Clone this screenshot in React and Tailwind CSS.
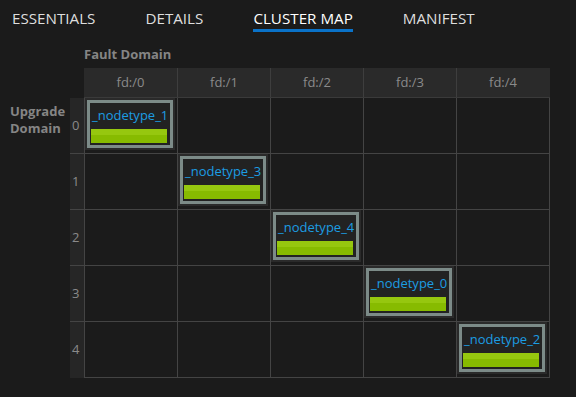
const tabs = ['ESSENTIALS', 'DETAILS', 'CLUSTER MAP', 'MANIFEST']
const faultDomains = ['fd:/0', 'fd:/1', 'fd:/2', 'fd:/3', 'fd:/4']
const nodes = ['_nodetype_1', '_nodetype_3', '_nodetype_4', '_nodetype_0', '_nodetype_2']

const NodeCard = ({ name }) => (
  <div className="w-[90px] h-[52px] border-2 border-[#2a2a2a]">
    <div className="h-full flex flex-col border-[3px] border-[#7c8b88] bg-[#222222] pl-[1px] pr-[3px] pb-[2px]">
      <div className="flex-1 pt-[4px] pl-[1px] text-[13px] leading-[17px] text-[#1c9de3] whitespace-nowrap">{name}</div>
      <div className="h-[14px] bg-[linear-gradient(#96c70f_0%,#96c70f_40%,#87bb00_40%)]"></div>
    </div>
  </div>
)

export default function App() {
  return (
    <div className="w-[576px] h-[397px] overflow-hidden bg-[#1b1b1b] font-['Open_Sans',sans-serif]">
      <nav className="flex gap-[50px] pl-[12px] pt-[7px]">
        {tabs.map((tab) => (
          <div key={tab} className="flex flex-col">
            <span className={`text-[15.2px] leading-[22px] ${tab === 'CLUSTER MAP' ? 'text-white' : 'text-[#dedede]'}`}>{tab}</span>
            <div className={`h-[3px] ${tab === 'CLUSTER MAP' ? 'bg-[#0a72c8]' : ''}`}></div>
          </div>
        ))}
      </nav>

      <div className="pl-[84px] pt-[13px] text-[13px] leading-[18px] font-bold text-[#858585]">Fault Domain</div>

      <div className="flex mt-[5px]">
        <div className="w-[70px] pl-[10px] pt-[35px] text-[13px] leading-[17px] font-bold text-[#858585]">
          Upgrade
          <br />
          Domain
        </div>

        <div className="flex flex-col">
          <div className="flex ml-[14px] h-[30px] bg-[#2a2a2a] border-b border-[#3a3a3a]">
            {faultDomains.map((fd, i) => (
              <div
                key={fd}
                className={`w-[93px] flex items-center justify-center text-[13px] text-[#8a8a8a] ${i > 0 ? 'border-l border-[#3e3e3e]' : ''}`}
              >
                {fd}
              </div>
            ))}
          </div>

          {nodes.map((node, row) => (
            <div key={node} className="flex">
              <div className={`w-[14px] h-[56px] bg-[#262626] flex items-center pl-[2px] text-[13px] text-[#8a8a8a] ${row < 4 ? 'border-b border-[#444]' : ''}`}>
                {row}
              </div>
              {faultDomains.map((fd, col) => (
                <div
                  key={fd}
                  className={`w-[93px] h-[56px] border-l border-b border-[#444] ${col === 4 ? 'w-[94px] border-r' : ''}`}
                >
                  {col === row && <NodeCard name={node} />}
                </div>
              ))}
            </div>
          ))}
        </div>
      </div>
    </div>
  )
}
